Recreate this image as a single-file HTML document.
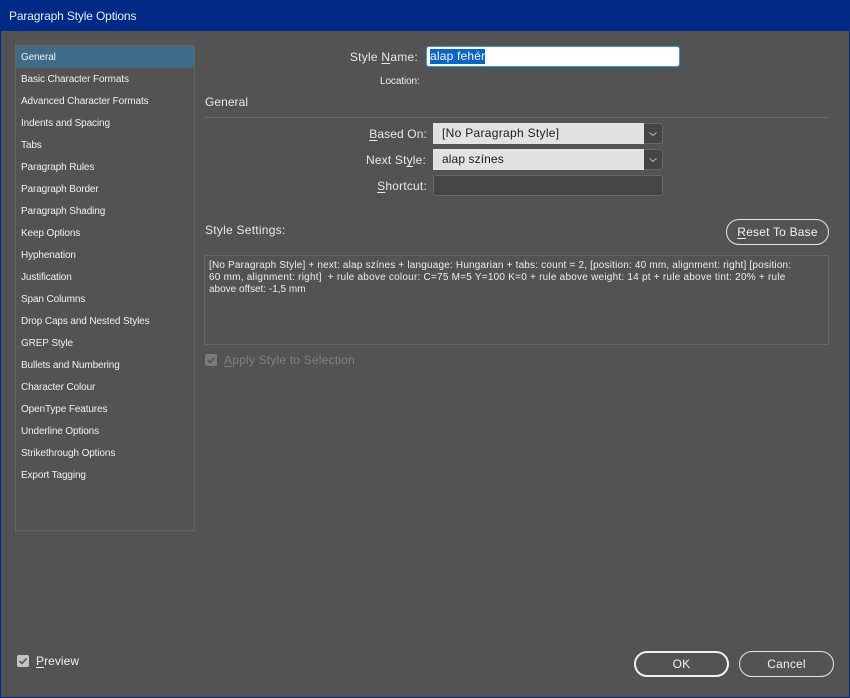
<!DOCTYPE html>
<html><head><meta charset="utf-8"><style>
html,body{margin:0;padding:0;background:#535353;}
#w{position:relative;width:850px;height:698px;overflow:hidden;background:#535353;font-family:"Liberation Sans",sans-serif;color:#f2f2f2;}
#w div{position:absolute;box-sizing:border-box;}
.t{white-space:pre;}
.l{left:21px;font-size:10px;line-height:14px;height:14px;color:#f0f0f0;letter-spacing:-.12px;}
.f{font-size:12px;line-height:16px;height:16px;letter-spacing:.25px;color:#e8e8e8;}
.r{font-size:12px;line-height:16px;height:16px;letter-spacing:.2px;color:#e8e8e8;text-align:right;}
u{text-underline-offset:2px;}
.s{font-size:10px;line-height:12px;height:12px;left:209px;color:#ececec;letter-spacing:.18px;}
.sel{background:#e2e2e2;height:21px;left:433px;width:211px;color:#1c1c1c;font-size:12px;line-height:21px;padding-left:9px;letter-spacing:.3px;}
.drop{background:#454545;height:21px;left:644px;width:19px;border:1px solid #666;border-left:0;border-radius:0 3px 3px 0;}
.btn{border:1.5px solid #e6e6e6;border-radius:13px;font-size:12px;text-align:center;letter-spacing:.2px;}
</style></head><body><div id="w">
<div style="left:0;top:0;width:850px;height:31px;background:#012a87"></div>
<div style="left:0;top:31px;width:1px;height:667px;background:#012a87"></div>
<div style="left:849px;top:31px;width:1px;height:667px;background:#012a87"></div>
<div style="left:0;top:697px;width:850px;height:1px;background:#012a87"></div>
<div class="t" style="left:9px;top:8px;font-size:12px;line-height:16px;color:#e8eefa;letter-spacing:-.15px">Paragraph Style Options</div>

<div style="left:15px;top:45px;width:180px;height:486px;border:1px solid #646464;"></div>
<div style="left:16px;top:46px;width:178px;height:22px;background:#3f6a88"></div>
<div class="t l" style="top:51px">General</div>
<div class="t l" style="top:73px">Basic Character Formats</div>
<div class="t l" style="top:95px">Advanced Character Formats</div>
<div class="t l" style="top:117px">Indents and Spacing</div>
<div class="t l" style="top:139px">Tabs</div>
<div class="t l" style="top:161px">Paragraph Rules</div>
<div class="t l" style="top:183px">Paragraph Border</div>
<div class="t l" style="top:205px">Paragraph Shading</div>
<div class="t l" style="top:227px">Keep Options</div>
<div class="t l" style="top:249px">Hyphenation</div>
<div class="t l" style="top:271px">Justification</div>
<div class="t l" style="top:293px">Span Columns</div>
<div class="t l" style="top:315px">Drop Caps and Nested Styles</div>
<div class="t l" style="top:337px">GREP Style</div>
<div class="t l" style="top:359px">Bullets and Numbering</div>
<div class="t l" style="top:381px">Character Colour</div>
<div class="t l" style="top:403px">OpenType Features</div>
<div class="t l" style="top:425px">Underline Options</div>
<div class="t l" style="top:447px">Strikethrough Options</div>
<div class="t l" style="top:469px">Export Tagging</div>

<div class="t r" style="left:300px;width:118px;top:49px;letter-spacing:.25px">Style <u>N</u>ame:</div>
<div style="left:426px;top:46px;width:254px;height:21px;background:#fff;border:1px solid #2f9be0;border-radius:3px;"></div>
<div class="t" style="left:430px;top:49px;width:55px;height:15px;background:#0a64c8;color:#f4f8ff;font-size:12px;line-height:15px;letter-spacing:.2px">alap fehér</div>
<div class="t" style="left:380px;top:75px;font-size:10px;line-height:14px;color:#eee;letter-spacing:-.1px">Location:</div>

<div class="t f" style="left:205px;top:94px;letter-spacing:.05px">General</div>
<div style="left:205px;top:117px;width:624px;height:1px;background:#6a6a6a"></div>

<div class="t r" style="left:300px;width:127px;top:126px;letter-spacing:.12px"><u>B</u>ased On:</div>
<div class="sel" style="top:123px">[No Paragraph Style]</div>
<div class="drop" style="top:123px"><svg width="18" height="19" style="position:absolute;left:0;top:0"><path d="M5.5 8.5l3.5 3 3.5-3" fill="none" stroke="#bdbdbd" stroke-width="1"/></svg></div>
<div class="t r" style="left:300px;width:126px;top:152px;letter-spacing:.18px">Next St<u>y</u>le:</div>
<div class="sel" style="top:149px;letter-spacing:.1px">alap színes</div>
<div class="drop" style="top:149px"><svg width="18" height="19" style="position:absolute;left:0;top:0"><path d="M5.5 8.5l3.5 3 3.5-3" fill="none" stroke="#bdbdbd" stroke-width="1"/></svg></div>
<div class="t r" style="left:300px;width:127px;top:178px"><u>S</u>hortcut:</div>
<div style="left:433px;top:175px;width:230px;height:21px;background:#454545;border:1px solid #666;border-radius:3px"></div>

<div class="t f" style="left:205px;top:222px">Style Settings:</div>
<div class="t btn" style="left:726px;top:219px;width:103px;height:26px;line-height:24px"><u>R</u>eset To Base</div>
<div style="left:204px;top:255px;width:625px;height:90px;border:1px solid #646464"></div>
<div class="t s" style="top:260px">[No Paragraph Style] + next: alap színes + language: Hungarian + tabs: count = 2, [position: 40 mm, alignment: right] [position:</div>
<div class="t s" style="top:272px;letter-spacing:.23px">60 mm, alignment: right]  + rule above colour: C=75 M=5 Y=100 K=0 + rule above weight: 14 pt + rule above tint: 20% + rule</div>
<div class="t s" style="top:284px;letter-spacing:0">above offset: -1,5 mm</div>

<div style="left:205px;top:354px;width:12px;height:12px;background:#7a7a7a;border-radius:2px"><svg width="12" height="12" style="position:absolute;left:0;top:0"><path d="M2.5 6l2.5 2.5 4.5-5" fill="none" stroke="#555" stroke-width="1.6"/></svg></div>
<div class="t f" style="left:224px;top:352px;color:#808080;letter-spacing:.2px"><u>A</u>pply Style to Selection</div>

<div style="left:17px;top:655px;width:12px;height:12px;background:#c4c4c4;border-radius:2px"><svg width="12" height="12" style="position:absolute;left:0;top:0"><path d="M2.5 6l2.5 2.5 4.5-5" fill="none" stroke="#555" stroke-width="1.6"/></svg></div>
<div class="t f" style="left:36px;top:653px;color:#f0f0f0;letter-spacing:.05px"><u>P</u>review</div>

<div class="t btn" style="left:634px;top:651px;width:95px;height:26px;border:2px solid #f0f0f0;line-height:22px">OK</div>
<div class="t btn" style="left:739px;top:651px;width:95px;height:26px;line-height:24px">Cancel</div>
</div></body></html>
